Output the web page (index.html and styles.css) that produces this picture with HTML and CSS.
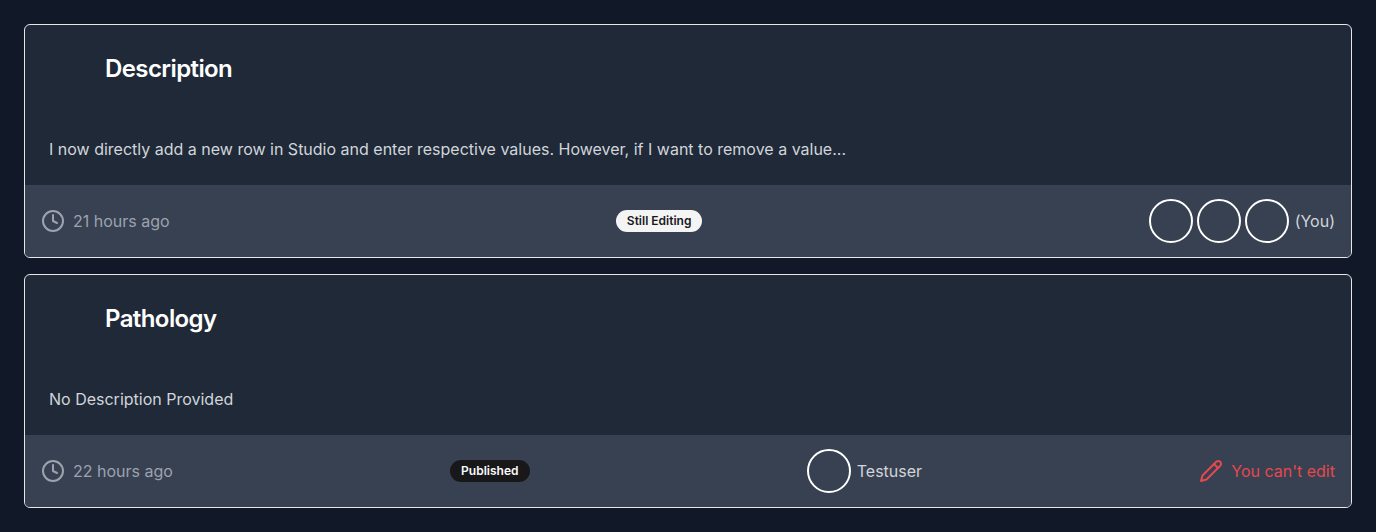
FILE: index.html
```html
<!DOCTYPE html>
<html lang="en">
<head>
<meta charset="utf-8">
<title>Entries</title>
<link rel="stylesheet" href="styles.css">
</head>
<body>
<main class="list">
  <article class="card">
    <header class="card-header"><h2 class="title">Description</h2></header>
    <p class="summary">I now directly add a new row in Studio and enter respective values. However, if I want to remove a value...</p>
    <footer class="card-footer">
      <div class="time">
        <svg class="icon" viewBox="0 0 24 24" aria-hidden="true"><circle cx="12" cy="12" r="10"/><polyline points="12 6 12 12 16 14"/></svg>
        <span>21 hours ago</span>
      </div>
      <span class="badge badge-light">Still Editing</span>
      <div class="people">
        <span class="avatar"></span><span class="avatar"></span><span class="avatar"></span>
        <span class="name">(You)</span>
      </div>
    </footer>
  </article>
  <article class="card">
    <header class="card-header"><h2 class="title">Pathology</h2></header>
    <p class="summary">No Description Provided</p>
    <footer class="card-footer">
      <div class="time">
        <svg class="icon" viewBox="0 0 24 24" aria-hidden="true"><circle cx="12" cy="12" r="10"/><polyline points="12 6 12 12 16 14"/></svg>
        <span>22 hours ago</span>
      </div>
      <span class="badge badge-dark">Published</span>
      <div class="people">
        <span class="avatar"></span>
        <span class="name">Testuser</span>
      </div>
      <div class="locked">
        <svg class="icon" viewBox="0 0 24 24" aria-hidden="true"><path d="M17 3a2.85 2.83 0 1 1 4 4L7.500 20.500 2 22l1.500-5.500Z"/><path d="m15 5 4 4"/></svg>
        <span>You can't edit</span>
      </div>
    </footer>
  </article>
</main>
</body>
</html>
```
FILE: styles.css
```css
* { box-sizing: border-box; }
body {
  margin: 0;
  background: #111827;
  color: #d1d5db;
  font: 16px/24px Inter, "Liberation Sans", sans-serif;
}
.list { display: flex; flex-direction: column; gap: 16px; padding: 24px; }
.card {
  background: #1f2937;
  border: 1px solid #e5e7eb;
  border-radius: 6px;
  overflow: hidden;
}
.card-header { padding: 28px 80px; }
.title { margin: 0; color: #fff; font-size: 24px; line-height: 32px; font-weight: 600; letter-spacing: -0.025em; }
.summary { margin: 0; padding: 24px; }
.card-footer {
  display: flex;
  align-items: center;
  justify-content: space-between;
  padding: 12px 16px;
  background: #374151;
}
.time, .locked { display: flex; align-items: center; gap: 8px; }
.time { color: #9ca3af; }
.locked { color: #e5484d; }
.icon {
  width: 24px;
  height: 24px;
  fill: none;
  stroke: currentColor;
  stroke-width: 2;
  stroke-linecap: round;
  stroke-linejoin: round;
}
.badge { padding: 3px 11px; border-radius: 11px; font-size: 12px; line-height: 16px; font-weight: 600; }
.badge-light { background: #f4f4f5; color: #18181b; }
.badge-dark { background: #18181b; color: #fafafa; }
.people { display: flex; align-items: center; gap: 4px; padding: 2px 0; }
.avatar { width: 44px; height: 44px; border: 2px solid #fff; border-radius: 50%; }
.name { padding-left: 2px; }
```
